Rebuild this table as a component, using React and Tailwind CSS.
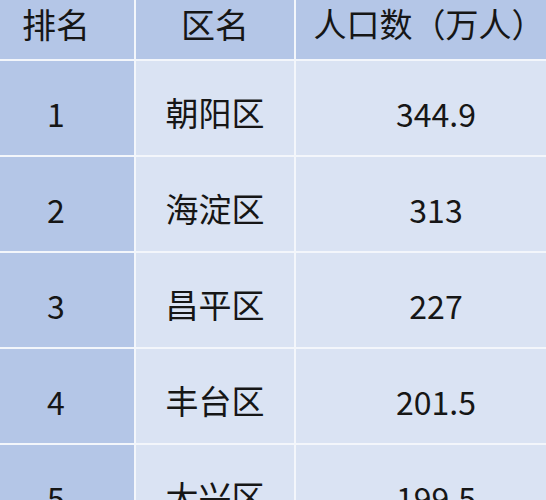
import React from 'react';

const rows = [
  { rank: '1', name: '朝阳区', pop: '344.9' },
  { rank: '2', name: '海淀区', pop: '313' },
  { rank: '3', name: '昌平区', pop: '227' },
  { rank: '4', name: '丰台区', pop: '201.5' },
  { rank: '5', name: '大兴区', pop: '199.5' },
];

export default function App() {
  return (
    <div
      className="w-[546px] h-[500px] overflow-hidden bg-[#f3f6fb] text-[#161616]"
      style={{ fontFamily: '"Noto Sans CJK SC", "Noto Sans", sans-serif' }}
    >
      <div className="grid grid-cols-[134px_158px_minmax(0,1fr)] gap-x-[2px] gap-y-[2px] auto-rows-[94px] grid-rows-[59px]">
        {/* header */}
        <div className="bg-[#b4c6e7] flex items-center justify-center pr-[22px] pb-[12px] text-[34px]">排名</div>
        <div className="bg-[#b4c6e7] flex items-center justify-center pb-[12px] text-[34px]">区名</div>
        <div className="bg-[#b4c6e7] flex items-center justify-center pl-[16px] pb-[12px] text-[33px] whitespace-nowrap">人口数（万人）</div>

        {rows.map(r => (
          <React.Fragment key={r.rank}>
            <div className="bg-[#b4c6e7] flex items-center justify-center pr-[22px] pt-[10px] text-[32px]">{r.rank}</div>
            <div className="bg-[#dae3f3] flex items-center justify-center pt-[10px] text-[33px]">{r.name}</div>
            <div className="bg-[#dae3f3] flex items-center justify-center pl-[30px] pt-[10px] text-[32px]">{r.pop}</div>
          </React.Fragment>
        ))}
      </div>
    </div>
  );
}
